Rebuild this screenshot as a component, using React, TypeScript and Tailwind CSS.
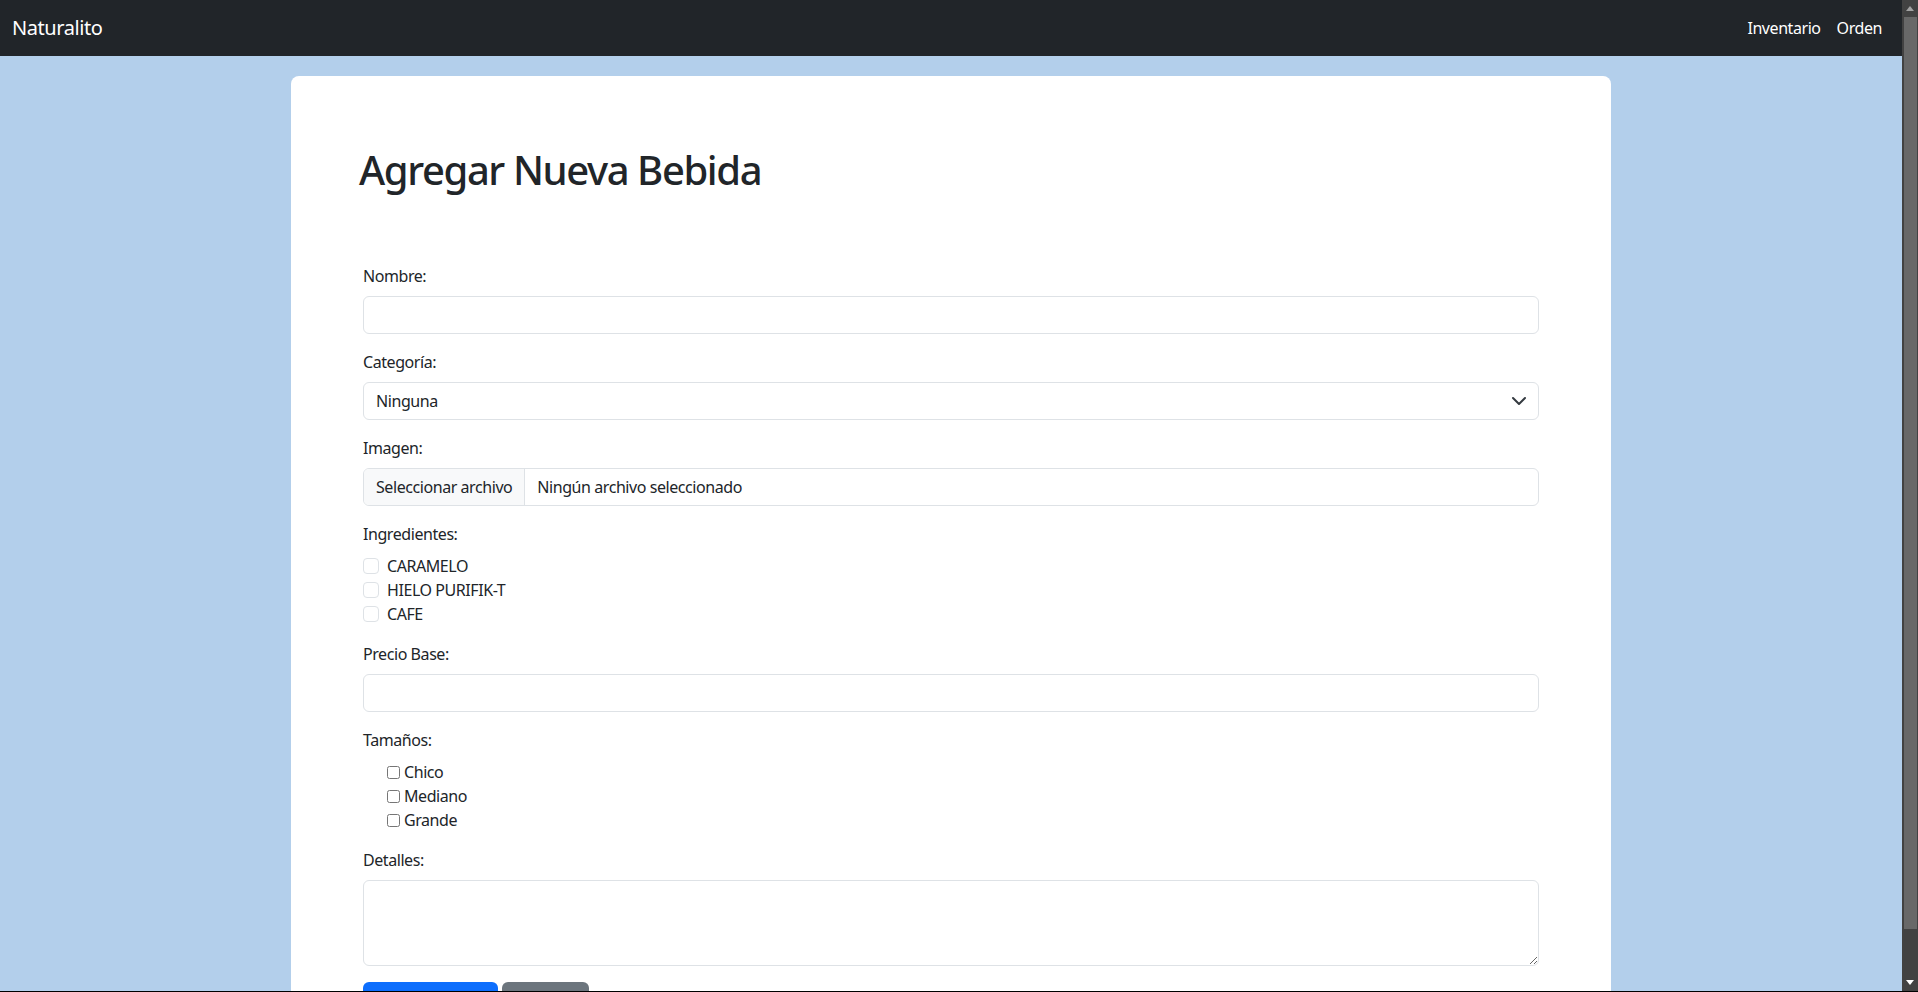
import { ChangeEvent, useState } from "react";

const INGREDIENTES = ["CARAMELO", "HIELO PURIFIK-T", "CAFE"];
const TAMANOS = ["Chico", "Mediano", "Grande"];

function Field({ label, children, gap = "mb-2" }: { label: string; children: React.ReactNode; gap?: string }) {
  return (
    <div className="mb-4">
      <label className={`block leading-6 ${gap}`}>{label}</label>
      {children}
    </div>
  );
}

/* fake Windows-style dark scrollbar on the right edge */
function Scrollbar() {
  return (
    <div className="w-4 shrink-0 bg-[#424242] flex flex-col">
      <div className="h-[17px] flex items-center justify-center">
        <svg width="8" height="5" viewBox="0 0 8 5">
          <polygon points="0,5 4,0 8,5" fill="#a3a3a3" />
        </svg>
      </div>
      <div className="h-[912px] ml-[2px] mr-[1px] bg-[#686868]" />
      <div className="flex-1" />
      <div className="h-[17px] flex items-center justify-center">
        <svg width="8" height="5" viewBox="0 0 8 5">
          <polygon points="0,0 8,0 4,5" fill="#ffffff" />
        </svg>
      </div>
    </div>
  );
}

export default function App() {
  const [nombre, setNombre] = useState("");
  const [precio, setPrecio] = useState("");

  return (
    <div className="flex h-[992px] w-full overflow-hidden border-b border-black bg-[#b3cfeb] font-['Noto_Sans',sans-serif] tracking-[-0.027em] text-[#212529]">
      <div className="flex-1 min-w-0 flex flex-col">
        {/* Navbar */}
        <nav className="h-14 shrink-0 bg-[#212529] flex items-center justify-between pl-3 pr-3">
          <span className="text-[20px] text-white">Naturalito</span>
          <div className="flex text-white">
            <a className="px-2">Inventario</a>
            <a className="px-2">Orden</a>
          </div>
        </nav>

        <main className="pt-5">
          <div className="mx-auto w-[1320px] rounded-lg bg-white pt-[70px] px-[66px]">
            <h1 className="ml-[2px] text-[40px] leading-[48px] font-medium tracking-[-0.035em] mb-[70px]">
              Agregar Nueva Bebida
            </h1>

            <form className="px-[6px]">
              <Field label="Nombre:">
                <input
                  value={nombre}
                  onChange={(e: ChangeEvent<HTMLInputElement>) => setNombre(e.target.value)}
                  className="block w-full h-[38px] px-3 border border-[#dee2e6] rounded-[6px] outline-none"
                />
              </Field>

              <Field label="Categoría:">
                <div className="relative">
                  <select className="block w-full h-[38px] pl-3 pr-9 appearance-none bg-white border border-[#dee2e6] rounded-[6px] outline-none">
                    <option>Ninguna</option>
                  </select>
                  <svg
                    className="absolute right-3 top-[13px] pointer-events-none"
                    width="16"
                    height="12"
                    viewBox="0 2 16 12"
                    fill="none"
                    stroke="#343a40"
                    strokeWidth="2"
                    strokeLinecap="round"
                    strokeLinejoin="round"
                  >
                    <path d="m2 5 6 6 6-6" />
                  </svg>
                </div>
              </Field>

              <Field label="Imagen:">
                <div className="flex h-[38px] border border-[#dee2e6] rounded-[6px] overflow-hidden">
                  <span className="flex items-center px-3 bg-[#f8f9fa] border-r border-[#dee2e6]">Seleccionar archivo</span>
                  <span className="flex items-center px-3">Ningún archivo seleccionado</span>
                </div>
              </Field>

              <Field label="Ingredientes:">
                {INGREDIENTES.map((ing) => (
                  <label key={ing} className="flex items-center h-6">
                    <input
                      type="checkbox"
                      className="appearance-none w-4 h-4 border border-[#dee2e6] rounded-[4px] bg-white mr-2"
                    />
                    {ing}
                  </label>
                ))}
              </Field>

              <Field label="Precio Base:">
                <input
                  value={precio}
                  onChange={(e: ChangeEvent<HTMLInputElement>) => setPrecio(e.target.value)}
                  className="block w-full h-[38px] px-3 border border-[#dee2e6] rounded-[6px] outline-none"
                />
              </Field>

              <Field label="Tamaños:">
                <div className="pl-5">
                  {TAMANOS.map((t) => (
                    <label key={t} className="flex items-center h-6">
                      <input type="checkbox" className="w-[13px] h-[13px] ml-1 mr-[4px]" />
                      {t}
                    </label>
                  ))}
                </div>
              </Field>

              <Field label="Detalles:">
                <textarea rows={3} className="block w-full h-[86px] px-3 py-1.5 border border-[#dee2e6] rounded-[6px] outline-none resize-y" />
              </Field>

              <div className="flex gap-1 pb-12">
                <button type="button" className="h-[38px] w-[135px] rounded-[6px] bg-[#0d6efd] text-white">
                  Agregar Bebida
                </button>
                <button type="button" className="h-[38px] w-[87px] rounded-[6px] bg-[#6c757d] text-white">
                  Cancelar
                </button>
              </div>
            </form>
          </div>
        </main>
      </div>
      <Scrollbar />
    </div>
  );
}
